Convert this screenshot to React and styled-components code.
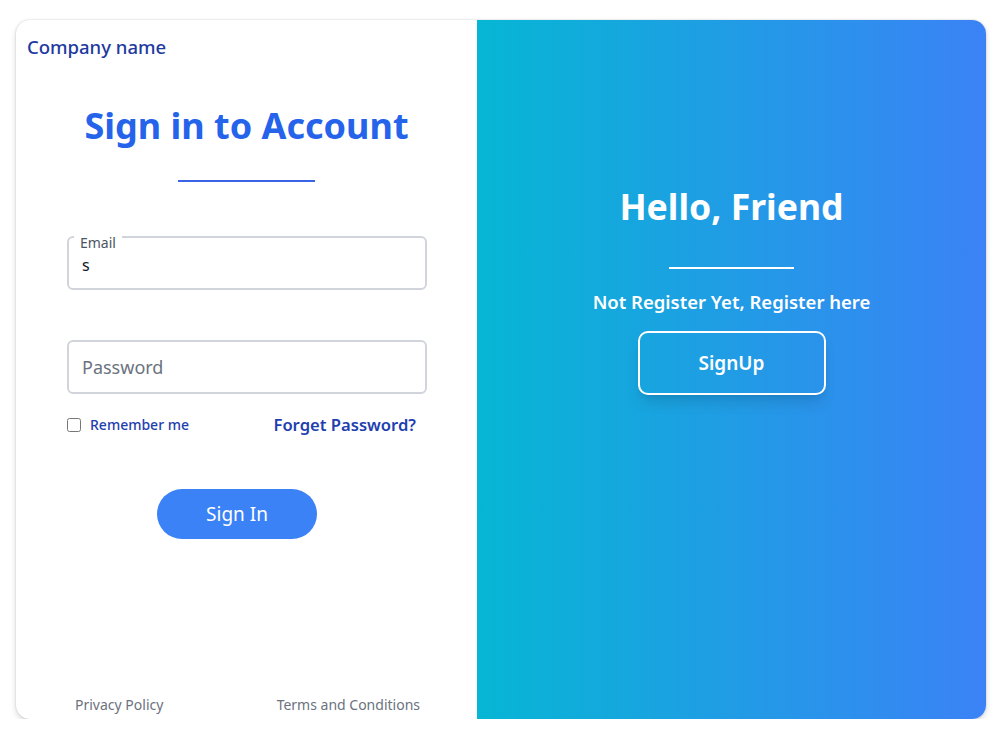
import React from "react";
import styled, { createGlobalStyle } from "styled-components";

const Global = createGlobalStyle`
  * { box-sizing: border-box; }
  html, body { margin: 0; padding: 0; background: #ffffff; }
  body { font-family: "Noto Sans", "Open Sans", Arial, sans-serif; }
`;

const Page = styled.div`
  padding: 20px 16px 0 16px;
`;

const Card = styled.div`
  width: 970px;
  height: 699px;
  display: flex;
  border-radius: 14px;
  overflow: hidden;
  background: #ffffff;
  box-shadow: 0 3px 6px rgba(0, 0, 0, 0.14), 0 0 2px rgba(0, 0, 0, 0.2);
`;

const LeftPanel = styled.section`
  width: 461px;
  display: flex;
  flex-direction: column;
  padding: 15px 0 0 0;
`;

const Brand = styled.div`
  padding-left: 11px;
  font-size: 18.5px;
  line-height: 24px;
  font-weight: 500;
  color: #1e3a9f;
`;

const Title = styled.h1`
  margin: 45px 0 0 0;
  text-align: center;
  font-size: 36px;
  line-height: 44px;
  font-weight: 700;
  color: #2563eb;
`;

const Rule = styled.div`
  align-self: center;
  width: ${(p) => p.$w}px;
  height: 2px;
  margin-top: ${(p) => p.$mt}px;
  background: ${(p) => p.$color};
`;

const Form = styled.div`
  width: 360px;
  margin: 54px 0 0 51px;
  display: flex;
  flex-direction: column;
`;

const Field = styled.div`
  position: relative;
  height: 54px;
  border: 2px solid #d1d5db;
  border-radius: 6px;
  margin-top: ${(p) => p.$mt || 0}px;
  display: flex;
  align-items: ${(p) => (p.$labelled ? "flex-end" : "center")};
  padding: ${(p) => (p.$labelled ? "0 0 12px 13px" : "0 0 0 13px")};
`;

const FloatLabel = styled.span`
  position: absolute;
  left: 5px;
  top: -3px;
  padding: 0 6px;
  background: #ffffff;
  font-size: 14px;
  line-height: 16px;
  color: #4b5563;
`;

const Input = styled.input`
  border: none;
  outline: none;
  width: 100%;
  padding: 0;
  background: transparent;
  font-family: inherit;
  font-size: ${(p) => p.$fs}px;
  color: #111827;
  &::placeholder { color: #6b7280; }
`;

const OptionsRow = styled.div`
  margin-top: 19px;
  display: flex;
  align-items: center;
  justify-content: space-between;
  padding-right: 11px;
`;

const Remember = styled.label`
  display: flex;
  align-items: center;
  gap: 9px;
  font-size: 14px;
  font-weight: 500;
  color: #1e40af;
`;

const Check = styled.input`
  margin: 0;
  width: 14px;
  height: 14px;
`;

const Forgot = styled.a`
  font-size: 16.6px;
  font-weight: 600;
  color: #1e40af;
  text-decoration: none;
`;

const SignInButton = styled.button`
  margin: 53px 0 0 90px;
  width: 160px;
  height: 50px;
  border: none;
  border-radius: 25px;
  background: #3b82f6;
  color: #ffffff;
  font-family: inherit;
  font-size: 19px;
`;

const Footer = styled.div`
  margin-top: auto;
  display: flex;
  justify-content: space-between;
  padding: 0 57px 4px 59px;
  font-size: 14px;
  line-height: 20px;
  color: #6b7280;
`;

const RightPanel = styled.section`
  flex: 1;
  background: linear-gradient(to right, #06b6d4, #3b82f6);
  display: flex;
  flex-direction: column;
  align-items: center;
  padding-top: 164px;
  color: #ffffff;
`;

const Hello = styled.h2`
  margin: 0;
  font-size: 35.6px;
  line-height: 44px;
  font-weight: 700;
`;

const Sub = styled.p`
  margin: 21px 0 0 0;
  font-size: 18.5px;
  line-height: 24px;
  font-weight: 600;
`;

const SignUpButton = styled.button`
  margin-top: 17px;
  width: 188px;
  height: 64px;
  border: 2px solid #ffffff;
  border-radius: 10px;
  background: transparent;
  color: #ffffff;
  font-family: inherit;
  font-size: 19px;
  font-weight: 600;
  box-shadow: 0 10px 15px -3px rgba(0, 0, 0, 0.12), 0 4px 6px -4px rgba(0, 0, 0, 0.1);
`;

export default function App() {
  return (
    <>
      <Global />
      <Page>
        <Card>
          <LeftPanel>
            <Brand>Company name</Brand>
            <Title>Sign in to Account</Title>
            <Rule $w={137} $mt={32} $color="#3b63e6" />
            <Form>
              <Field $labelled>
                <FloatLabel>Email</FloatLabel>
                <Input $fs={16} defaultValue="s" />
              </Field>
              <Field $mt={50}>
                <Input $fs={18} placeholder="Password" type="password" />
              </Field>
              <OptionsRow>
                <Remember>
                  <Check type="checkbox" />
                  Remember me
                </Remember>
                <Forgot href="#">Forget Password?</Forgot>
              </OptionsRow>
              <SignInButton>Sign In</SignInButton>
            </Form>
            <Footer>
              <span>Privacy Policy</span>
              <span>Terms and Conditions</span>
            </Footer>
          </LeftPanel>
          <RightPanel>
            <Hello>Hello, Friend</Hello>
            <Rule $w={125} $mt={39} $color="#ffffff" />
            <Sub>Not Register Yet, Register here</Sub>
            <SignUpButton>SignUp</SignUpButton>
          </RightPanel>
        </Card>
      </Page>
    </>
  );
}
